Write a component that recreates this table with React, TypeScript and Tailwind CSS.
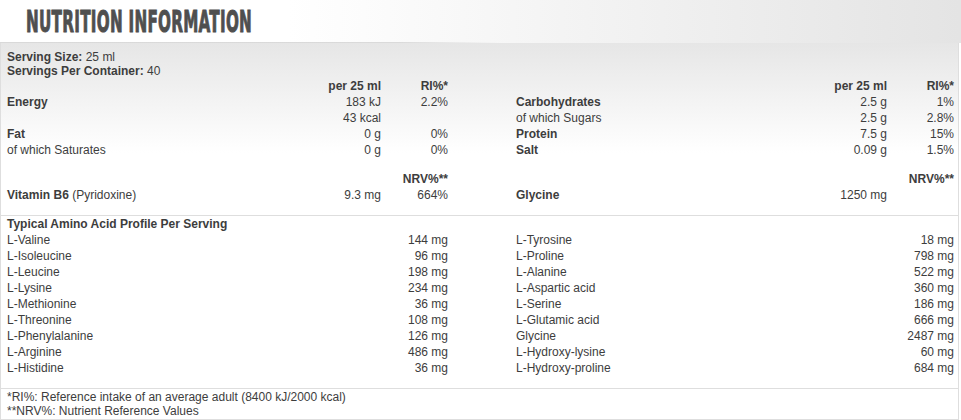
import React from "react";

const COLS = "grid grid-cols-[274px_100px_67px_68px_271px_100px_67px]";

function Row({ c }: { c: (React.ReactNode | null)[] }) {
  return (
    <div className={`${COLS} h-[16px] leading-[16px]`}>
      {c.map((x, i) => (
        <div
          key={i}
          className={
            i === 1 || i === 2 || i === 5 || i === 6
              ? "text-right whitespace-nowrap"
              : "whitespace-nowrap"
          }
        >
          {x}
        </div>
      ))}
    </div>
  );
}

const leftAmino: [string, string][] = [
  ["L-Valine", "144 mg"],
  ["L-Isoleucine", "96 mg"],
  ["L-Leucine", "198 mg"],
  ["L-Lysine", "234 mg"],
  ["L-Methionine", "36 mg"],
  ["L-Threonine", "108 mg"],
  ["L-Phenylalanine", "126 mg"],
  ["L-Arginine", "486 mg"],
  ["L-Histidine", "36 mg"],
];
const rightAmino: [string, string][] = [
  ["L-Tyrosine", "18 mg"],
  ["L-Proline", "798 mg"],
  ["L-Alanine", "522 mg"],
  ["L-Aspartic acid", "360 mg"],
  ["L-Serine", "186 mg"],
  ["L-Glutamic acid", "666 mg"],
  ["Glycine", "2487 mg"],
  ["L-Hydroxy-lysine", "60 mg"],
  ["L-Hydroxy-proline", "684 mg"],
];

const B = ({ children }: { children: React.ReactNode }) => (
  <span className="font-bold">{children}</span>
);

export default function App() {
  return (
    <div
      className="w-[961px] h-[420px] overflow-hidden bg-white text-[12px] text-[#3d3d3d]"
      style={{ fontFamily: '"Liberation Sans", Arial, sans-serif' }}
    >
      {/* header */}
      <div className="h-[43px] flex flex-col bg-[linear-gradient(to_right,#ffffff_0%,#ffffff_30%,#e4e4e4_100%)]">
        <div className="flex-1 pl-[26px] pt-[4px] overflow-visible">
          <span
            className="inline-block origin-left scale-x-[0.545] text-[31px] leading-[34px] font-bold text-[#4f4f4f] tracking-[0.5px] whitespace-nowrap [-webkit-text-stroke:1px_#4f4f4f]"
            style={{ fontFamily: '"DejaVu Sans Condensed", "DejaVu Sans", sans-serif' }}
          >
            NUTRITION INFORMATION
          </span>
        </div>
        <div className="h-[1px] w-[500px] bg-[linear-gradient(to_right,#d9d9d9_0%,#dadada_80%,rgba(220,220,220,0)_100%)]" />
      </div>

      {/* content */}
      <div className="w-[959px] border-x border-b border-[#dedede] bg-[linear-gradient(to_bottom,#e6e6e6_0px,#ffffff_110px)]">
        <div className="pl-[6px] pt-[7px]">
          <div className="leading-[14px]">
            <B>Serving Size:</B> 25 ml
          </div>
          <div className="leading-[14px]">
            <B>Servings Per Container:</B> 40
          </div>
          <Row c={[null, <B>per 25 ml</B>, <B>RI%*</B>, null, null, <B>per 25 ml</B>, <B>RI%*</B>]} />
          <Row c={[<B>Energy</B>, "183 kJ", "2.2%", null, <B>Carbohydrates</B>, "2.5 g", "1%"]} />
          <Row c={[null, "43 kcal", null, null, "of which Sugars", "2.5 g", "2.8%"]} />
          <Row c={[<B>Fat</B>, "0 g", "0%", null, <B>Protein</B>, "7.5 g", "15%"]} />
          <Row c={["of which Saturates", "0 g", "0%", null, <B>Salt</B>, "0.09 g", "1.5%"]} />
          <div className="h-[13px]" />
          <Row c={[null, null, <B>NRV%**</B>, null, null, null, <B>NRV%**</B>]} />
          <Row
            c={[
              <>
                <B>Vitamin B6</B> (Pyridoxine)
              </>,
              "9.3 mg",
              "664%",
              null,
              <B>Glycine</B>,
              "1250 mg",
              null,
            ]}
          />
          <div className="h-[12px]" />
        </div>
        <div className="border-t border-[#dedede] pl-[6px]">
          <Row c={[<B>Typical Amino Acid Profile Per Serving</B>, null, null, null, null, null, null]} />
          {leftAmino.map((l, i) => (
            <Row key={i} c={[l[0], null, l[1], null, rightAmino[i][0], null, rightAmino[i][1]]} />
          ))}
          <div className="h-[12px]" />
        </div>
        <div className="border-t border-[#dedede] pl-[6px] pt-[1px] pb-[1px] leading-[14px]">
          <div>*RI%: Reference intake of an average adult (8400 kJ/2000 kcal)</div>
          <div>**NRV%: Nutrient Reference Values</div>
        </div>
      </div>
    </div>
  );
}
